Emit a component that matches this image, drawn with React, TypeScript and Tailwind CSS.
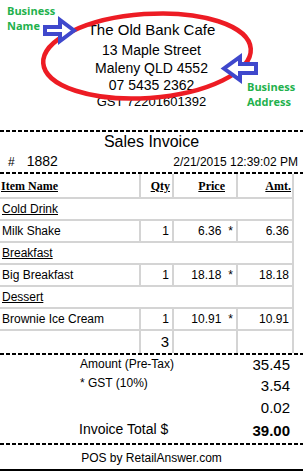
import * as React from "react";

type Item = { name: string; qty: number; price: string; amt: string };
type Group = { category: string; items: Item[] };

const groups: Group[] = [
  { category: "Cold Drink", items: [{ name: "Milk Shake", qty: 1, price: "6.36", amt: "6.36" }] },
  { category: "Breakfast", items: [{ name: "Big Breakfast", qty: 1, price: "18.18", amt: "18.18" }] },
  { category: "Dessert", items: [{ name: "Brownie Ice Cream", qty: 1, price: "10.91", amt: "10.91" }] },
];

const cell = "border-r-2 border-b-2 border-[#d4d4d4] flex items-center";

const Dashed = () => (
  <div className="h-[2px] w-full bg-[repeating-linear-gradient(90deg,#000_0_4px,transparent_4px_6px)]" />
);

const Annotations = () => (
  <div className="pointer-events-none absolute left-0 top-0 h-[120px] w-[306px]">
    <svg width="306" height="120" className="absolute left-0 top-0">
      <ellipse
        cx="147"
        cy="56"
        rx="104"
        ry="42"
        transform="rotate(-4 147 56)"
        fill="none"
        stroke="#ed1c24"
        strokeWidth="4.5"
      />
      <polygon
        points="45,27 60,27 60,20 74,30.5 60,41 60,34 45,34"
        fill="#fff"
        stroke="#3f48cc"
        strokeWidth="4"
      />
      <polygon
        points="256,64 240,64 240,57 224,68.5 240,80 240,73 256,73"
        fill="#fff"
        stroke="#3f48cc"
        strokeWidth="4"
      />
    </svg>
    <div className="absolute left-[7px] top-[3px] font-['Open_Sans',sans-serif] text-[11px] font-bold leading-[15px] text-[#22b14c]">
      <div>Business</div>
      <div>Name</div>
    </div>
    <div className="absolute left-[247px] top-[79px] font-['Open_Sans',sans-serif] text-[11px] font-bold leading-[15px] text-[#22b14c]">
      <div>Business</div>
      <div>Address</div>
    </div>
  </div>
);

export default function App() {
  return (
    <div className="relative h-[472px] w-[306px] overflow-hidden bg-white font-['Liberation_Sans',Arial,sans-serif] text-black">
      <div className="w-[303px]">
        {/* shop header */}
        <div className="flex flex-col items-center pt-[20px]">
          <div className="text-[15px] leading-[20px]">The Old Bank Cafe</div>
          <div className="mt-[1px] text-[14px] leading-[18px]">13 Maple Street</div>
          <div className="text-[14px] leading-[18px]">Maleny QLD 4552</div>
          <div className="text-[14px] leading-[17px]">07 5435 2362</div>
          <div className="text-[13px] leading-[16px]">GST 72201601392</div>
        </div>
        <div className="mt-[20px]">
          <Dashed />
        </div>
        <div className="text-center text-[16px] leading-[20px]">Sales Invoice</div>
        <div className="flex h-[18px] items-baseline pl-[8px] pr-[5px]">
          <span className="text-[12px]">#</span>
          <span className="ml-[12px] text-[14px] leading-[18px]">1882</span>
          <span className="ml-auto text-[12px]">2/21/2015 12:39:02 PM</span>
        </div>
        <div className="mt-[2px]">
          <Dashed />
        </div>

        {/* items table */}
        <div className="grid grid-cols-[141px_33px_64px_56px] text-[12px]">
          <div className={`${cell} h-[25px] pl-[1px] font-['Liberation_Serif',serif] font-bold underline`}>
            Item Name
          </div>
          <div className={`${cell} h-[25px] justify-end pr-[2px] font-['Liberation_Serif',serif] font-bold underline`}>
            Qty
          </div>
          <div className={`${cell} h-[25px] justify-end pr-[11px] font-['Liberation_Serif',serif] font-bold underline`}>
            Price
          </div>
          <div className={`${cell} h-[25px] justify-end pr-[1px] font-['Liberation_Serif',serif] font-bold underline`}>
            Amt.
          </div>
          {groups.map((g) => (
            <React.Fragment key={g.category}>
              <div className={`${cell} col-span-4 h-[22px] pl-[2px] underline`}>{g.category}</div>
              {g.items.map((it) => (
                <React.Fragment key={it.name}>
                  <div className={`${cell} h-[22px] pl-[2px]`}>{it.name}</div>
                  <div className={`${cell} h-[22px] justify-end pr-[3px]`}>{it.qty}</div>
                  <div className={`${cell} h-[22px] justify-end pr-[3px]`}>
                    {it.price}
                    <span className="ml-[7px]">*</span>
                  </div>
                  <div className={`${cell} h-[22px] justify-end pr-[3px]`}>{it.amt}</div>
                </React.Fragment>
              ))}
            </React.Fragment>
          ))}
          <div className="h-[22px] border-r-2 border-[#d4d4d4]" />
          <div className="flex h-[22px] items-center justify-end border-r-2 border-[#d4d4d4] pr-[3px] text-[15px]">
            3
          </div>
          <div className="h-[22px] border-r-2 border-[#d4d4d4]" />
          <div className="h-[22px] border-r-2 border-[#d4d4d4]" />
        </div>
        <Dashed />

        {/* totals */}
        <div className="pr-[13px]">
          <div className="flex h-[20px] items-start">
            <div className="flex-1 pl-[80px] text-[12px] leading-[18px]">Amount (Pre-Tax)</div>
            <div className="text-[15px] leading-[20px]">35.45</div>
          </div>
          <div className="flex h-[22px] items-start">
            <div className="flex-1 pl-[80px] text-[12px] leading-[16px]">* GST (10%)</div>
            <div className="text-[15px] leading-[22px]">3.54</div>
          </div>
          <div className="flex h-[22px] items-center justify-end">
            <div className="text-[15px] leading-[22px]">0.02</div>
          </div>
          <div className="flex h-[24px] items-start">
            <div className="flex-1 pl-[79px] text-[14px] leading-[20px]">Invoice Total $</div>
            <div className="text-[15px] font-bold leading-[24px]">39.00</div>
          </div>
        </div>
        <Dashed />
        <div className="pt-[2px] text-center text-[12px] leading-[22px]">POS by RetailAnswer.com</div>
        <div className="h-[2px] w-full bg-black" />
      </div>
      <Annotations />
    </div>
  );
}
